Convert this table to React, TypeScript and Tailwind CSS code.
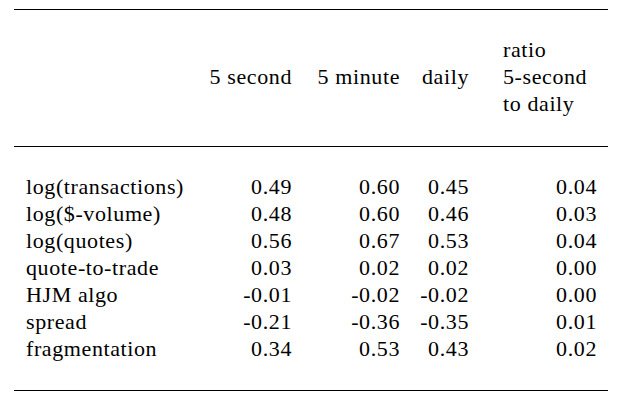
import React from "react";

const rows: [string, string, string, string, string][] = [
  ["log(transactions)", "0.49", "0.60", "0.45", "0.04"],
  ["log($-volume)", "0.48", "0.60", "0.46", "0.03"],
  ["log(quotes)", "0.56", "0.67", "0.53", "0.04"],
  ["quote-to-trade", "0.03", "0.02", "0.02", "0.00"],
  ["HJM algo", "-0.01", "-0.02", "-0.02", "0.00"],
  ["spread", "-0.21", "-0.36", "-0.35", "0.01"],
  ["fragmentation", "0.34", "0.53", "0.43", "0.02"],
];

export default function App() {
  return (
    <div className="w-[635px] h-[408px] bg-white text-black font-serif">
      <div className="pt-[9px] pl-[14px] w-[608px] text-[22px] leading-[27px] tracking-[0.6px] font-['Liberation_Serif']">
        <div className="h-px bg-black" />
        <div className="grid grid-cols-[174px_92px_108px_69px_128px] items-center pl-[12px] pt-[26px] pb-[29px]">
          <div />
          <div className="text-right">5 second</div>
          <div className="text-right">5 minute</div>
          <div className="text-right">daily</div>
          <div className="pl-[34px] flex flex-col">
            <span>ratio</span>
            <span>5-second</span>
            <span>to daily</span>
          </div>
        </div>
        <div className="h-px bg-black" />
        <div className="grid grid-cols-[174px_92px_108px_69px_128px] pl-[12px] pt-[26px] pb-[28px]">
          {rows.map((r) => (
            <React.Fragment key={r[0]}>
              <div className="whitespace-nowrap">{r[0]}</div>
              <div className="text-right">{r[1]}</div>
              <div className="text-right">{r[2]}</div>
              <div className="text-right">{r[3]}</div>
              <div className="text-right">{r[4]}</div>
            </React.Fragment>
          ))}
        </div>
        <div className="h-px bg-black" />
      </div>
    </div>
  );
}
